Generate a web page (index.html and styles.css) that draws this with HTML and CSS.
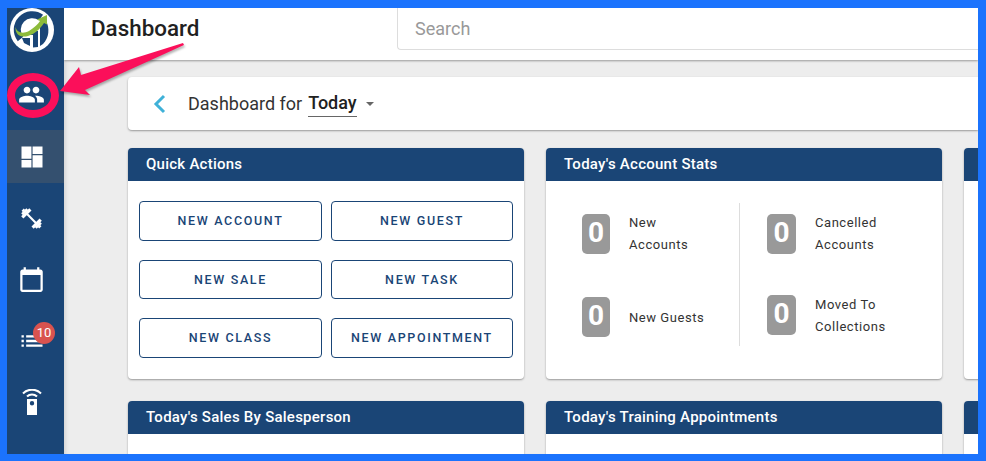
FILE: index.html
```html
<!DOCTYPE html>
<html lang="en">
<head>
  <meta charset="UTF-8">
  <title>Dashboard</title>
  <link rel="stylesheet" href="styles.css">
</head>
<body>
  <div class="frame">
    <aside class="sidebar">
      <div class="logo">
        <svg width="44" height="44" viewBox="0 0 44 44">
          <circle cx="22" cy="22" r="22" fill="#fff"/>
          <path d="M31 9.500A15 15 0 0 0 10.500 31" fill="none" stroke="#1a4576" stroke-width="7"/>
          <path d="M20 23H28V39L23 39.500V27H20Z" fill="#1a4576"/>
          <path d="M30 17 36 13C40 20 39 30 33 36L30 38Z" fill="#1a4576"/>
          <path d="M12 30H20V38L14 35Z" fill="#1a4576"/>
          <path d="M5.500 19C7 25 13 26 19 23C24 20 28 16 30 13L27 11.500 37 7 37 16.500 34 15C30 21 25 26 18 28C11 30 5 27 5.500 19Z" fill="#8dbb3b"/>
        </svg>
      </div>
      <div class="nav-item nav-people">
        <svg width="27" height="27" viewBox="0 0 24 24"><path fill="#fff" d="M16 11c1.660 0 2.990-1.340 2.990-3S17.660 5 16 5s-3 1.340-3 3 1.340 3 3 3zm-8 0c1.660 0 2.990-1.340 2.990-3S9.660 5 8 5 5 6.340 5 8s1.340 3 3 3zm0 2c-2.330 0-7 1.170-7 3.500V19h14v-2.500c0-2.330-4.670-3.500-7-3.500zm8 0c-.29 0-.62.020-.97.050 1.160.84 1.970 1.970 1.970 3.450V19h6v-2.500c0-2.330-4.670-3.500-7-3.500z"/></svg>
      </div>
      <div class="nav-item nav-active">
        <svg width="28" height="28" viewBox="0 0 24 24"><path fill="#fff" d="M3 13.500h8.500V3H3zm0 7.500h8.500v-6.500H3zm9.500 0H21V10.500h-8.500zm0-18v6.500H21V3z"/></svg>
      </div>
      <div class="nav-item">
        <svg width="25" height="25" viewBox="0 0 24 24"><g fill="#fff" transform="rotate(45 12 12)"><rect x="6" y="11" width="12" height="2"/><rect x="3.500" y="6.500" width="3" height="11"/><rect x="17.500" y="6.500" width="3" height="11"/><rect x="1.500" y="8.500" width="2.500" height="7"/><rect x="20" y="8.500" width="2.500" height="7"/><rect x="0" y="10.500" width="2" height="3"/><rect x="22" y="10.500" width="2" height="3"/></g></svg>
      </div>
      <div class="nav-item">
        <svg width="27" height="27" viewBox="0 0 24 24"><path fill="#fff" d="M20 3h-1V1h-2v2H7V1H5v2H4c-1.100 0-2 .9-2 2v16c0 1.100.9 2 2 2h16c1.100 0 2-.9 2-2V5c0-1.100-.9-2-2-2zm0 18H4V8h16v13z"/></svg>
      </div>
      <div class="nav-item">
        <svg width="28" height="28" viewBox="0 0 24 24"><path fill="#fff" d="M3 13h2v-2H3v2zm0 4h2v-2H3v2zm0-8h2V7H3v2zm4 4h14v-2H7v2zm0 4h14v-2H7v2zM7 7v2h14V7H7z"/></svg>
        <span class="badge">10</span>
      </div>
      <div class="nav-item">
        <svg width="20" height="26" viewBox="0 0 20 26"><path fill="#fff" fill-rule="evenodd" d="M5 10h10v16H5zM10 12a2.200 2.200 0 1 0 0 4.400 2.200 2.200 0 0 0 0-4.400z"/><path fill="none" stroke="#fff" stroke-width="2" d="M5 7.500a7 7 0 0 1 10 0M1 4.500a12.500 12.500 0 0 1 18 0"/></svg>
      </div>
    </aside>

    <div class="main">
      <header class="topbar">
        <h1 class="title">Dashboard</h1>
        <div class="search">Search</div>
      </header>

      <div class="content">
        <div class="date-panel">
          <svg class="back" width="16" height="22" viewBox="0 0 16 22"><path d="M12 3 4 11l8 8" fill="none" stroke="#3fb1d8" stroke-width="3"/></svg>
          <span class="date-label">Dashboard for</span>
          <span class="date-value">Today</span>
          <span class="caret"></span>
        </div>

        <div class="cards">
          <section class="card">
            <h2 class="card-head">Quick Actions</h2>
            <div class="actions">
              <button class="action">NEW ACCOUNT</button>
              <button class="action">NEW GUEST</button>
              <button class="action">NEW SALE</button>
              <button class="action">NEW TASK</button>
              <button class="action">NEW CLASS</button>
              <button class="action">NEW APPOINTMENT</button>
            </div>
          </section>

          <section class="card">
            <h2 class="card-head">Today's Account Stats</h2>
            <div class="stats">
              <div class="stat-col">
                <div class="stat"><span class="count">0</span><span class="stat-name">New<br>Accounts</span></div>
                <div class="stat stat-guests"><span class="count">0</span><span class="stat-name">New Guests</span></div>
              </div>
              <div class="stat-col stat-col-right">
                <div class="stat"><span class="count">0</span><span class="stat-name">Cancelled<br>Accounts</span></div>
                <div class="stat"><span class="count">0</span><span class="stat-name">Moved To<br>Collections</span></div>
              </div>
            </div>
          </section>

          <section class="card"><h2 class="card-head">&nbsp;</h2></section>

          <section class="card">
            <h2 class="card-head">Today's Sales By Salesperson</h2>
          </section>
          <section class="card">
            <h2 class="card-head">Today's Training Appointments</h2>
          </section>
          <section class="card"><h2 class="card-head">&nbsp;</h2></section>
        </div>
      </div>
    </div>

    <div class="callout">
      <div class="ring"></div>
      <svg class="arrow" width="130" height="60" viewBox="0 0 130 60"><path d="M1 49 20 25 22 33 124 1 125 3 26 48 31 53Z" fill="#fb0f5a"/></svg>
    </div>
  </div>
</body>
</html>
```

FILE: styles.css
```css
html, body {
  margin: 0;
  height: 100%;
  overflow: hidden;
}
body {
  font-family: Roboto, sans-serif;
  background-color: #1b73fd;
}
.frame {
  position: relative;
  display: flex;
  width: 971px;
  height: 446px;
  margin: 8px 0 0 7px;
  overflow: hidden;
}
.sidebar {
  flex: 0 0 57px;
  background-color: #1a4576;
  z-index: 2;
}
.logo {
  display: flex;
  justify-content: center;
  height: 44px;
  padding-right: 7px;
}
.nav-item {
  position: relative;
  display: flex;
  align-items: center;
  justify-content: center;
  box-sizing: border-box;
  height: 61px;
  padding-right: 8px;
}
.nav-people {
  height: 78px;
  padding-top: 6px;
}
.nav-active {
  height: 53px;
  margin-bottom: 5px;
  background-color: #34506f;
}
.badge {
  position: absolute;
  top: 12px;
  left: 26px;
  width: 22px;
  height: 22px;
  border-radius: 50%;
  background-color: #d9534f;
  color: #fff;
  font-size: 13px;
  line-height: 22px;
  text-align: center;
}
.main {
  flex: 1;
  min-width: 0;
  background-color: #ededed;
  box-shadow: inset 4px 0 4px -3px #ccc;
}
.topbar {
  display: flex;
  align-items: flex-start;
  height: 52px;
  background-color: #fff;
  box-shadow: 0 1px 2px #999;
}
.title {
  flex: 0 0 333px;
  margin: 6px 0 0 0;
  padding-left: 27px;
  box-sizing: border-box;
  font-size: 22.400px;
  font-weight: 500;
  line-height: 29px;
  color: #212121;
}
.search {
  flex: 1;
  height: 41px;
  border: 1px solid #ddd;
  border-top: none;
  border-right: none;
  border-bottom-left-radius: 4px;
  padding-left: 17px;
  font-size: 18px;
  line-height: 41px;
  color: #999;
}
.content {
  padding: 17px 0 0 64px;
}
.date-panel {
  display: flex;
  align-items: center;
  height: 53px;
  padding-left: 24px;
  background-color: #fff;
  border-radius: 4px 0 0 4px;
  box-shadow: 0 1px 2px #999;
}
.date-label {
  margin-left: 20px;
  font-size: 18px;
  color: #333;
}
.date-value {
  margin-left: 6px;
  font-size: 18px;
  font-weight: 500;
  color: #212121;
  border-bottom: 1px solid #666;
  line-height: 26px;
}
.caret {
  margin-left: 9px;
  border-left: 4px solid transparent;
  border-right: 4px solid transparent;
  border-top: 4px solid #666;
}
.cards {
  display: grid;
  grid-template-columns: 396px 396px 396px;
  grid-template-rows: 231px 231px;
  gap: 22px;
  margin-top: 18px;
}
.card {
  background-color: #fff;
  border-radius: 4px;
  box-shadow: 0 1px 2px #999;
  overflow: hidden;
}
.card-head {
  margin: 0;
  height: 33px;
  padding-left: 18px;
  background-color: #1a4576;
  color: #fff;
  font-size: 15px;
  font-weight: 500;
  letter-spacing: 0.250px;
  line-height: 33px;
}
.actions {
  display: grid;
  grid-template-columns: 183px 182px;
  grid-template-rows: 40px 39px 40px;
  column-gap: 9px;
  row-gap: 19px;
  padding: 20px 0 0 11px;
}
.action {
  padding: 0 0 1px;
  background-color: #fff;
  border: 1px solid #1a4576;
  border-radius: 4px;
  color: #1a4576;
  font-family: Roboto, sans-serif;
  font-size: 12.500px;
  font-weight: 500;
  letter-spacing: 1.650px;
}
.stats {
  display: flex;
  height: 143px;
  margin-top: 22px;
}
.stat-col {
  flex: 0 0 194px;
  padding-left: 36px;
  box-sizing: border-box;
  border-right: 1px solid #ddd;
}
.stat-col-right {
  padding-left: 27px;
  border-right: none;
}
.stat {
  display: flex;
  align-items: center;
  gap: 19px;
  height: 40px;
  margin-top: 11px;
}
.stat + .stat {
  margin-top: 41px;
}
.stat + .stat-guests {
  margin-top: 43px;
}
.stat + .stat .stat-name {
  padding-top: 2px;
}
.count {
  flex: 0 0 28px;
  height: 40px;
  border-radius: 5px;
  background-color: #999;
  color: #fff;
  font-size: 28px;
  font-weight: 700;
  line-height: 38px;
  text-align: center;
}
.stat-col-right .count {
  flex-basis: 29px;
}
.stat-name {
  font-size: 13px;
  line-height: 22px;
  letter-spacing: 0.550px;
  color: #333;
}
.callout {
  position: absolute;
  top: 0;
  left: 0;
  z-index: 3;
}
.ring {
  position: absolute;
  top: 65px;
  left: 0;
  width: 52px;
  height: 45px;
  border: 8px solid #fb0f5a;
  border-radius: 50%;
  box-sizing: border-box;
}
.arrow {
  position: absolute;
  top: 34px;
  left: 52px;
  filter: drop-shadow(1px 2px 1px rgba(0, 0, 0, 0.3));
}
```
